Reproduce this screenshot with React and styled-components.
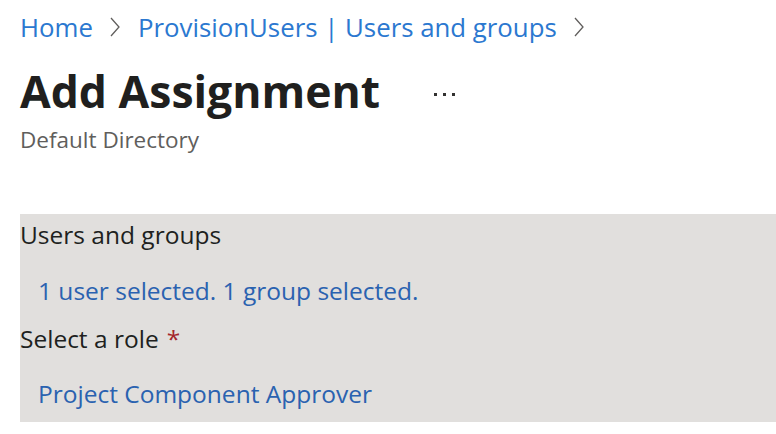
import React from "react";
import styled, { createGlobalStyle } from "styled-components";

const Global = createGlobalStyle`
  html, body {
    margin: 0;
    background: #ffffff;
    font-family: "Open Sans", "Noto Sans", sans-serif;
  }
`;

const Page = styled.div`
  width: 776px;
  height: 434px;
  overflow: hidden;
  padding-left: 20px;
  box-sizing: border-box;
`;

const Crumbs = styled.nav`
  display: flex;
  align-items: center;
  height: 54px;
  font-size: 25.8px;
  white-space: nowrap;
`;

const CrumbLink = styled.a`
  color: #2b78d0;
  text-decoration: none;
`;

const Chevron = styled.span`
  display: inline-flex;
  margin: 0 18px 0 17px;
`;

const TitleRow = styled.div`
  display: flex;
  align-items: center;
  height: 74px;
`;

const Title = styled.h1`
  margin: 0;
  font-size: 44.5px;
  line-height: 1.2;
  font-weight: 700;
  color: #201f1e;
`;

const More = styled.span`
  margin: 6px 0 0 54px;
  display: inline-flex;
  gap: 6px;
  span {
    width: 3px;
    height: 3px;
    background: #323130;
  }
`;

const Subtitle = styled.div`
  font-size: 22.5px;
  color: #605e5c;
  line-height: 24px;
`;

const Panel = styled.section`
  margin-top: 62px;
  background: #e1dfdd;
  padding: 4px 0 11px;
  font-size: 24.5px;
  line-height: 34px;
`;

const Label = styled.div`
  color: #201f1e;
  white-space: nowrap;
`;

const Value = styled.div`
  padding: ${(p) => p.$pad};
  color: #2a62b0;
  white-space: nowrap;
`;

const Required = styled.span`
  color: #a4262c;
  margin-left: 8px;
`;

const ChevronIcon = () => (
  <svg width="10" height="20" viewBox="0 0 10 20">
    <path d="M1 1 L9 10 L1 19" fill="none" stroke="#605e5c" strokeWidth="1.3" />
  </svg>
);

export default function App() {
  return (
    <Page>
      <Global />
      <Crumbs>
        <CrumbLink href="#">Home</CrumbLink>
        <Chevron><ChevronIcon /></Chevron>
        <CrumbLink href="#">ProvisionUsers | Users and groups</CrumbLink>
        <Chevron><ChevronIcon /></Chevron>
      </Crumbs>
      <TitleRow>
        <Title>Add Assignment</Title>
        <More><span /><span /><span /></More>
      </TitleRow>
      <Subtitle>Default Directory</Subtitle>
      <Panel>
        <Label>Users and groups</Label>
        <Value $pad="22px 18px 14px">1 user selected. 1 group selected.</Value>
        <Label>Select a role<Required>*</Required></Label>
        <Value $pad="21px 18px 0">Project Component Approver</Value>
      </Panel>
    </Page>
  );
}
